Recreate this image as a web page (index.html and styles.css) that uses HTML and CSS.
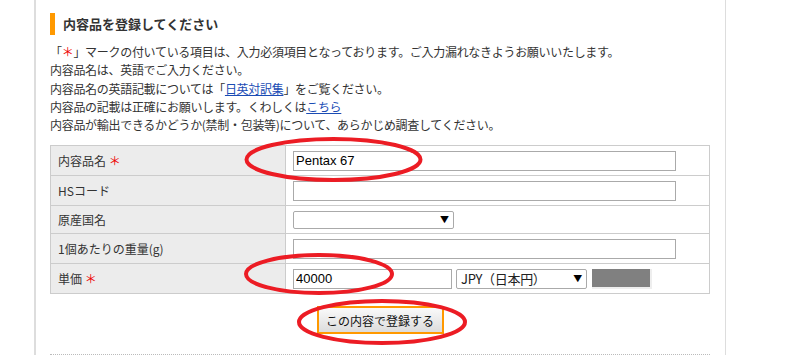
FILE: index.html
```html
<!DOCTYPE html>
<html lang="ja">

<head>
    <meta charset="UTF-8">
    <meta name="viewport" content="width=device-width, initial-scale=1.0">
    <title>内容品登録</title>
    <link rel="stylesheet" href="styles.css">
</head>

<body>
    <div class="page">
        <div class="content">
            <h2 class="title">内容品を登録してください</h2>
            <div class="notes">
                <p>「<span class="req">＊</span>」マークの付いている項目は、入力必須項目となっております。ご入力漏れなきようお願いいたします。</p>
                <p>内容品名は、英語でご入力ください。</p>
                <p>内容品名の英語記載については「<a href="#">日英対訳集</a>」をご覧ください。</p>
                <p>内容品の記載は正確にお願いします。くわしくは<a href="#">こちら</a></p>
                <p>内容品が輸出できるかどうか(禁制・包装等)について、あらかじめ調査してください。</p>
            </div>

            <table class="form">
                <tbody>
                    <tr class="row">
                        <th>内容品名 <span class="req">＊</span></th>
                        <td><input class="txt wide" type="text" value="Pentax 67"></td>
                    </tr>
                    <tr class="row">
                        <th>HSコード</th>
                        <td><input class="txt wide" type="text" value=""></td>
                    </tr>
                    <tr class="row short">
                        <th>原産国名</th>
                        <td><span class="sel country"><span></span><i>▼</i></span></td>
                    </tr>
                    <tr class="row">
                        <th>1個あたりの重量(g)</th>
                        <td><input class="txt wide" type="text" value=""></td>
                    </tr>
                    <tr class="row">
                        <th>単価 <span class="req">＊</span></th>
                        <td>
                            <div class="price">
                                <input class="txt amount" type="text" value="40000">
                                <span class="sel currency"><span>JPY（日本円）</span><i>▼</i></span>
                                <span class="gray"></span>
                            </div>
                        </td>
                    </tr>
                </tbody>
            </table>

            <div class="actions">
                <button type="button" class="submit">この内容で登録する</button>
            </div>
            <div class="dots"></div>
        </div>
    </div>

    <!-- 赤い丸（注釈） -->
    <svg class="marks" width="787" height="355" viewBox="0 0 787 355">
        <ellipse cx="333.5" cy="159.5" rx="87" ry="20.5" />
        <ellipse cx="319" cy="274" rx="73" ry="19" />
        <ellipse cx="382" cy="322" rx="83" ry="21" />
    </svg>
</body>

</html>
```

FILE: styles.css
```css
* {
    margin: 0;
    padding: 0;
    box-sizing: border-box;
}

body {
    font-family: "Noto Sans CJK JP", "Liberation Sans", sans-serif;
    font-size: 12px;
    color: #333;
    background: #fff;
    width: 787px;
    height: 355px;
    overflow: hidden;
    position: relative;
}

.page {
    margin-left: 34px;
    width: 692px;
    height: 355px;
    border-left: 2px solid #ddd;
    border-right: 1px solid #ddd;
}

.content {
    padding: 13px 15px 0 14px;
}

.title {
    height: 22px;
    line-height: 22px;
    border-left: 5px solid #f90;
    padding-left: 8px;
    font-size: 13px;
    font-weight: bold;
    color: #333;
}

.notes {
    margin-top: 8px;
    line-height: 18.3px;
    letter-spacing: -0.3px;
}

.notes a {
    color: #1a4cb4;
    text-decoration: underline;
}

.req {
    color: #e00;
}

.form {
    width: 660px;
    margin-top: 11px;
    border-collapse: collapse;
}

.form th,
.form td {
    border: 1px solid #ccc;
    height: 30px;
    vertical-align: middle;
}

.form .short th,
.form .short td {
    height: 28px;
}

.form th {
    width: 235px;
    background: #ececec;
    text-align: left;
    font-weight: normal;
    padding-left: 7px;
}

.form td {
    padding-left: 7px;
}

.txt {
    display: block;
    height: 20px;
    border: 1px solid #aaa;
    padding: 0 2px;
    font-family: "Liberation Sans", sans-serif;
    font-size: 13px;
    color: #000;
    outline: none;
}

.wide {
    width: 383px;
}

.sel {
    display: flex;
    justify-content: space-between;
    align-items: center;
    height: 18px;
    border: 1px solid #aaa;
    border-radius: 2px;
    padding: 0 4px 0 4px;
    background: #fff;
    color: #222;
}

.sel i {
    font-style: normal;
    font-size: 9px;
    color: #000;
}

.country {
    width: 161px;
}

.price {
    display: flex;
    align-items: center;
    gap: 4px;
}

.amount {
    width: 159px;
}

.currency {
    width: 131px;
    height: 20px;
    font-size: 13px;
    letter-spacing: -0.3px;
}

.gray {
    display: block;
    width: 60px;
    height: 20px;
    margin-left: 1px;
    background: #808080;
    border-right: 2px solid #eee;
    border-bottom: 2px solid #eee;
}

.actions {
    margin-top: 12px;
    text-align: center;
}

.submit {
    width: 127px;
    height: 28px;
    border: 2px solid #f90;
    background: linear-gradient(#fafafa, #dcdcdc);
    font-family: "Noto Sans CJK JP", sans-serif;
    font-size: 12px;
    color: #111;
}

.dots {
    margin-top: 20px;
    border-top: 1px dotted #bbb;
    width: 660px;
}

.marks {
    position: absolute;
    left: 0;
    top: 0;
    pointer-events: none;
}

.marks ellipse {
    fill: none;
    stroke: #ec1c24;
    stroke-width: 4;
}
```
